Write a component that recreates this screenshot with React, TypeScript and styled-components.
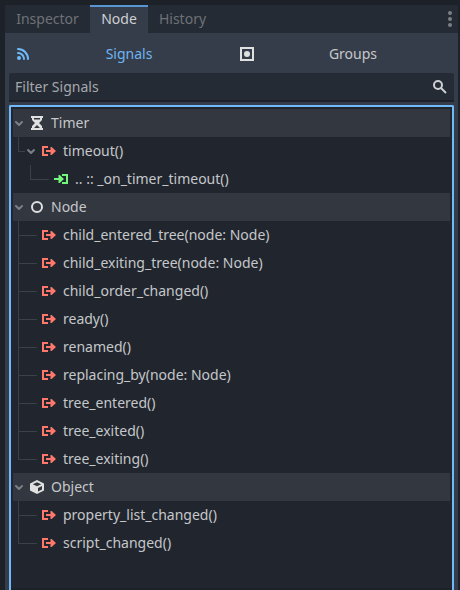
import React from "react";
import styled, { createGlobalStyle } from "styled-components";

const Global = createGlobalStyle`
  body {
    margin: 0;
    background: #1d2229;
    font-family: "Noto Sans", sans-serif;
    font-size: 14px;
    color: #c5c7ca;
  }
  * { box-sizing: border-box; }
  svg { display: block; flex: none; }
`;

const Screen = styled.div`
  height: 590px;
  padding: 5px 2px 0 5px;
  overflow: hidden;
`;

const Dock = styled.section`
  display: flex;
  flex-direction: column;
  height: 585px;
  background: #363d4a;
  border-radius: 3px 3px 0 0;
  overflow: hidden;
`;

const TabBar = styled.div`
  display: flex;
  height: 28px;
  background: #252b34;
  padding-right: 6px;
`;

const Tab = styled.div<{ $active?: boolean; $width: number }>`
  width: ${(p) => p.$width}px;
  height: 28px;
  line-height: 24px;
  text-align: center;
  border-top: 2px solid ${(p) => (p.$active ? "#5896d3" : "transparent")};
  background: ${(p) => (p.$active ? "#363d4a" : "transparent")};
  color: ${(p) => (p.$active ? "#cdcfd2" : "#6d7177")};
`;

const Spacer = styled.div`
  flex: 1;
`;

const Modes = styled.div`
  display: grid;
  grid-template-columns: 224px 224px;
  height: 40px;
  padding: 2px 0 0 4px;
`;

const Mode = styled.button<{ $active?: boolean }>`
  display: flex;
  align-items: center;
  border: 0;
  margin: 0;
  padding: 0 6px 0 6px;
  background: none;
  font: inherit;
  color: ${(p) => (p.$active ? "#6fb5f2" : "#c5c7ca")};
`;

const ModeLabel = styled.span`
  flex: 1;
  text-align: center;
  line-height: 20px;
`;

const Filter = styled.div`
  display: flex;
  align-items: center;
  justify-content: space-between;
  height: 29px;
  margin: 0 4px;
  padding: 0 6px;
  background: #252b34;
  border-bottom: 2px solid #1d2229;
  border-radius: 2px 2px 0 0;
  color: #a5a8ad;
`;

const Tree = styled.div`
  flex: 1;
  margin: 3px 4px 0;
  padding: 2px;
  background: #21262e;
  border: 2px solid #70bafa;
  border-bottom: 0;
  border-radius: 2px 2px 0 0;
  box-shadow: inset 0 -2px #1d2229;
`;

const Row = styled.div<{ $group?: boolean }>`
  display: flex;
  align-items: center;
  height: 28px;
  padding-left: ${(p) => (p.$group ? 0 : 5)}px;
  background: ${(p) => (p.$group ? "#33373f" : "transparent")};
`;

const Guide = styled.div<{ $width: number; $last?: boolean; $indent?: number }>`
  display: flex;
  flex-direction: column;
  width: ${(p) => p.$width}px;
  height: 28px;
  margin-left: ${(p) => p.$indent ?? 0}px;
  &::before {
    content: "";
    height: 14px;
    border-left: 1px solid #3b4048;
    border-bottom: 1px solid #3b4048;
  }
  &::after {
    content: "";
    height: 14px;
    border-left: 1px solid ${(p) => (p.$last ? "transparent" : "#3b4048")};
  }
`;

const IconSlot = styled.span<{ $left: number }>`
  margin-left: ${(p) => p.$left}px;
  margin-right: 6px;
`;

const Label = styled.span`
  line-height: 20px;
  white-space: pre;
`;

const Chevron = () => (
  <svg width="12" height="12" viewBox="0 0 12 12">
    <path
      d="M3 5 6 8l3-3"
      fill="none"
      stroke="#7b7f86"
      strokeWidth="2"
      strokeLinecap="round"
      strokeLinejoin="round"
    />
  </svg>
);

const SignalIcon = () => (
  <svg width="16" height="16" viewBox="0 0 16 16" fill="#ff786b">
    <path d="M1 3h6v2H3v6h4v2H1zM5 7h4.5V4h1.2L15 8l-4.3 4H9.500V9H5z" />
  </svg>
);

const SlotIcon = () => (
  <svg width="16" height="16" viewBox="0 0 16 16" fill="#72f67c">
    <path d="M9 3h6v10H9v-2h4V5H9zM1 7h4.500V4h1.200L11 8l-4.300 4H5.500V9H1z" />
  </svg>
);

const TimerIcon = () => (
  <svg width="16" height="16" viewBox="0 0 16 16">
    <path
      fill="#e0e0e0"
      fillRule="evenodd"
      d="M2 1h12v2h-1v2l-3 3 3 3v2h1v2H2v-2h1v-2l3-3-3-3V3H2zm3 2v1.500h6V3zm3 7-3 3h6z"
    />
  </svg>
);

const NodeIcon = () => (
  <svg width="16" height="16" viewBox="0 0 16 16">
    <circle cx="8" cy="8" r="5" fill="none" stroke="#e0e0e0" strokeWidth="2" />
  </svg>
);

const ObjectIcon = () => (
  <svg width="16" height="16" viewBox="0 0 16 16">
    <path fill="#e0e0e0" d="M8 1 1 4.5v7L8 15l7-3.5v-7zm0 2.2L12.2 5.2 8 7.3 3.8 5.2zM9 9l4-2v3.5l-4 2z" />
  </svg>
);

const SignalsIcon = () => (
  <svg width="16" height="16" viewBox="0 0 16 16" fill="none" stroke="#70bafa" strokeWidth="2">
    <circle cx="4" cy="12" r="2" fill="#70bafa" stroke="none" />
    <path d="M3 7a6 6 0 0 1 6 6M3 3a10 10 0 0 1 10 10" strokeLinecap="round" />
  </svg>
);

const GroupsIcon = () => (
  <svg width="16" height="16" viewBox="0 0 16 16">
    <path d="M2 2h12v12H2z" fill="none" stroke="#e0e0e0" strokeWidth="2" />
    <circle cx="8" cy="8" r="3" fill="#e0e0e0" />
  </svg>
);

const SearchIcon = () => (
  <svg width="16" height="16" viewBox="0 0 16 16" fill="none" stroke="#cdcfd2" strokeWidth="2">
    <circle cx="6" cy="6" r="4" />
    <path d="m9 9 5 5" />
  </svg>
);

const MenuIcon = () => (
  <svg width="4" height="28" viewBox="0 0 4 28" fill="#7b7f85">
    <circle cx="2" cy="8" r="2" />
    <circle cx="2" cy="14" r="2" />
    <circle cx="2" cy="20" r="2" />
  </svg>
);

type GroupProps = { icon: React.ReactNode; name: string };

const Group = ({ icon, name }: GroupProps) => (
  <Row $group>
    <Chevron />
    <IconSlot $left={4}>{icon}</IconSlot>
    <Label>{name}</Label>
  </Row>
);

const Signals = ({ names }: { names: string[] }) => (
  <>
    {names.map((name, i) => (
      <Row key={name}>
        <Guide $width={19} $last={i === names.length - 1} />
        <IconSlot $left={4}>
          <SignalIcon />
        </IconSlot>
        <Label>{name}</Label>
      </Row>
    ))}
  </>
);

const nodeSignals = [
  "child_entered_tree(node: Node)",
  "child_exiting_tree(node: Node)",
  "child_order_changed()",
  "ready()",
  "renamed()",
  "replacing_by(node: Node)",
  "tree_entered()",
  "tree_exited()",
  "tree_exiting()",
];

const objectSignals = ["property_list_changed()", "script_changed()"];

export default function App() {
  return (
    <Screen>
      <Global />
      <Dock>
        <TabBar>
          <Tab $width={85}>Inspector</Tab>
          <Tab $width={58} $active>Node</Tab>
          <Tab $width={69}>History</Tab>
          <Spacer />
          <MenuIcon />
        </TabBar>
        <Modes>
          <Mode $active>
            <SignalsIcon />
            <ModeLabel>Signals</ModeLabel>
          </Mode>
          <Mode>
            <GroupsIcon />
            <ModeLabel>Groups</ModeLabel>
          </Mode>
        </Modes>
        <Filter>
          <Label>Filter Signals</Label>
          <SearchIcon />
        </Filter>
        <Tree>
          <Group icon={<TimerIcon />} name="Timer" />
          <Row>
            <Guide $width={7} $last />
            <Chevron />
            <IconSlot $left={4}>
              <SignalIcon />
            </IconSlot>
            <Label>timeout()</Label>
          </Row>
          <Row>
            <Guide $indent={12} $width={19} $last />
            <IconSlot $left={4}>
              <SlotIcon />
            </IconSlot>
            <Label>.. :: _on_timer_timeout()</Label>
          </Row>
          <Group icon={<NodeIcon />} name="Node" />
          <Signals names={nodeSignals} />
          <Group icon={<ObjectIcon />} name="Object" />
          <Signals names={objectSignals} />
        </Tree>
      </Dock>
    </Screen>
  );
}
